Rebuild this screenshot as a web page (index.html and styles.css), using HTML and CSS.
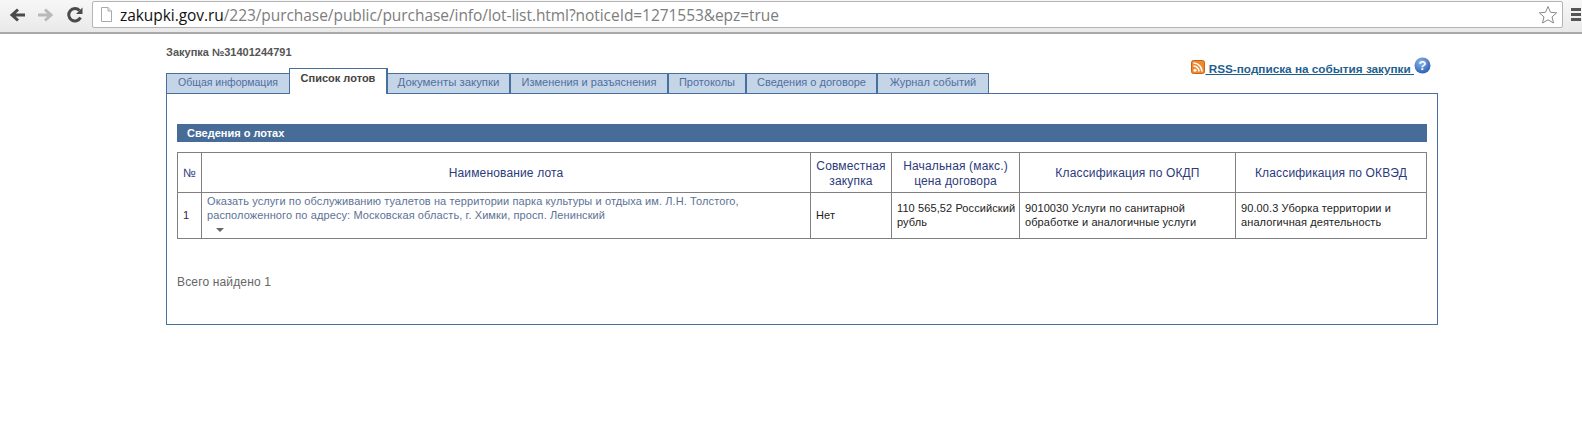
FILE: index.html
```html
<!DOCTYPE html>
<html lang="ru">
<head>
<meta charset="utf-8">
<title>Список лотов</title>
<link rel="stylesheet" href="styles.css">
</head>
<body>
<header class="toolbar">
  <svg class="nav-icon" width="20" height="20" viewBox="0 0 20 20"><path d="M18 10H6M11 4.5L5 10l6 5.5" fill="none" stroke="#4a4a4a" stroke-width="3"/></svg>
  <svg class="nav-icon" width="20" height="20" viewBox="0 0 20 20"><path d="M2 10h12M9 4.5l6 5.500-6 5.500" fill="none" stroke="#b9b9b9" stroke-width="3"/></svg>
  <svg class="nav-icon" width="20" height="20" viewBox="0 0 20 20"><path d="M15.500 12.500A6.200 6.200 0 1 1 14.500 5.500" fill="none" stroke="#4a4a4a" stroke-width="3"/><path d="M17.500 2.500v6.500h-6.500z" fill="#4a4a4a"/></svg>
  <div class="omnibox">
    <svg class="page-icon" width="13" height="15" viewBox="0 0 13 15"><path d="M1.500 .5h6.500l3.500 3.500v10.500h-10z" fill="#fff" stroke="#a9a9a9"/><path d="M8 .5v3.500h3.500" fill="#eee" stroke="#a9a9a9"/></svg>
    <span class="url"><span class="host">zakupki.gov.ru</span>/223/purchase/public/purchase/info/lot-list.html?noticeId=1271553&amp;epz=true</span>
    <svg class="star" width="20" height="20" viewBox="0 0 20 20"><path d="M10 1.500l2.500 5.800 6.200.5-4.700 4.100 1.500 6.100L10 14.800l-5.500 3.200L6 11.900 1.300 7.800l6.200-.5z" fill="#fff" stroke="#8a8a8a"/></svg>
  </div>
  <div class="menu-icon"><span></span><span></span><span></span></div>
</header>

<main class="page">
  <h1 class="purchase">Закупка №31401244791</h1>
  <div class="tabs-row">
    <nav class="tabs">
      <a class="tab tab-1">Общая информация</a>
      <a class="tab tab-2 active">Список лотов</a>
      <a class="tab tab-3">Документы закупки</a>
      <a class="tab tab-4">Изменения и разъяснения</a>
      <a class="tab tab-5">Протоколы</a>
      <a class="tab tab-6">Сведения о договоре</a>
      <a class="tab tab-7">Журнал событий</a>
    </nav>
    <div class="rss">
      <svg class="rss-icon" width="14" height="14" viewBox="0 0 14 14"><rect x=".5" y=".5" width="13" height="13" rx="2" fill="#ee8a2c" stroke="#c8641a"/><circle cx="4" cy="10.200" r="1.500" fill="#fff"/><path d="M2.500 6a5.500 5.500 0 0 1 5.500 5.500M2.500 3a8.500 8.500 0 0 1 8.500 8.500" fill="none" stroke="#fff" stroke-width="1.600"/></svg>
      <a class="rss-link"> RSS-подписка на события закупки </a>
      <svg class="help-icon" width="17" height="17" viewBox="0 0 17 17"><defs><radialGradient id="helpGradient" cx=".4" cy=".3" r=".8"><stop offset="0" stop-color="#8db4ea"/><stop offset="1" stop-color="#1f57ad"/></radialGradient></defs><circle cx="8.500" cy="8.500" r="8" fill="url(#helpGradient)"/><text x="8.500" y="13" class="help-mark">?</text></svg>
    </div>
  </div>
  <section class="panel">
    <h2 class="section-title">Сведения о лотах</h2>
    <table class="lots">
      <colgroup>
        <col class="c-num"><col class="c-name"><col class="c-joint"><col class="c-price"><col class="c-okdp"><col class="c-okved">
      </colgroup>
      <thead>
        <tr>
          <th class="num-head">№</th>
          <th>Наименование лота</th>
          <th>Совместная закупка</th>
          <th>Начальная (макс.) цена договора</th>
          <th>Классификация по ОКДП</th>
          <th>Классификация по ОКВЭД</th>
        </tr>
      </thead>
      <tbody>
        <tr>
          <td class="num">1</td>
          <td class="lot-name">
            <a>Оказать услуги по обслуживанию туалетов на территории парка культуры и отдыха им. Л.Н. Толстого, расположенного по адресу: Московская область, г. Химки, просп. Ленинский</a>
            <span class="caret"></span>
          </td>
          <td>Нет</td>
          <td>110 565,52 Российский рубль</td>
          <td>9010030 Услуги по санитарной обработке и аналогичные услуги</td>
          <td>90.00.3 Уборка территории и аналогичная деятельность</td>
        </tr>
      </tbody>
    </table>
    <p class="total">Всего найдено 1</p>
  </section>
</main>
</body>
</html>
```
FILE: styles.css
```css
* { box-sizing: border-box; }
html, body { margin: 0; padding: 0; background: #fff; overflow: hidden; }
body { font-family: "Liberation Sans", Arial, sans-serif; color: #333; }

.toolbar {
  display: flex;
  align-items: center;
  height: 34px;
  padding: 0 0 3px 7px;
  background: linear-gradient(#f7f7f7, #e9e9e9);
  border-bottom: 2px solid #a9a9a9;
  gap: 9px;
}
.nav-icon { flex: none; margin-top: 1px; }
.omnibox {
  display: flex;
  align-items: center;
  flex: none;
  width: 1471px;
  height: 27px;
  margin-left: -2px;
  padding: 0 4px 0 7px;
  background: #fff;
  border: 1px solid #b4b4b4;
  border-radius: 2px;
}
.page-icon { flex: none; margin-right: 7px; }
.url {
  flex: 1;
  font-family: "Open Sans", "Liberation Sans", sans-serif;
  font-size: 15.5px;
  color: #7d7d7d;
  white-space: nowrap;
  letter-spacing: -.06px;
}
.host { color: #111; }
.star { flex: none; }
.menu-icon { display: flex; flex-direction: column; gap: 2px; flex: none; margin-left: -1px; width: 10px; }
.menu-icon span { display: block; height: 3px; background: #555; }

.page { width: 1272px; margin-left: 166px; padding-top: 12px; }
.purchase { margin: 0; font-size: 11px; line-height: 12px; font-weight: bold; color: #555; }

.tabs-row {
  display: flex;
  justify-content: space-between;
  align-items: flex-end;
  height: 35px;
  margin-right: 7px;
  position: relative;
  z-index: 1;
}
.tabs { display: flex; align-items: flex-end; margin-bottom: -1px; }
.tab {
  display: block;
  height: 21px;
  padding-top: 2px;
  font-size: 11px;
  line-height: 13px;
  text-align: center;
  color: #4f6f9f;
  background: #c5d5e8;
  border: 1px solid #47709f;
  border-left-width: 0;
  border-right-width: 2px;
}
.tab-1 { width: 123px; font-size: 10.5px; border-left-width: 1px; border-right-width: 0; }
.tab-2 { width: 99px; }
.tab-3 { width: 123px; font-size: 11.4px; }
.tab-4 { width: 158px; }
.tab-5 { width: 78px; }
.tab-6 { width: 131px; }
.tab-7 { width: 111px; border-right-width: 1px; }
.tab.active {
  height: 26px;
  padding-top: 3px;
  font-weight: bold;
  color: #444;
  background: #fff;
  border-width: 1px 2px 0 1px;
}

.rss { display: flex; align-items: flex-end; margin-bottom: 18px; }
.rss-icon { flex: none; margin-bottom: 1px; }
.rss-link {
  font-size: 11.75px;
  line-height: 13px;
  font-weight: bold;
  color: #1f5f8f;
  text-decoration: underline;
  white-space: pre;
}
.help-icon { flex: none; margin-bottom: 1px; }
.help-mark { font: bold 13px "Liberation Sans", sans-serif; fill: #fff; text-anchor: middle; }

.panel {
  height: 232px;
  padding: 30px 10px 0;
  border: 1px solid #47709f;
}
.section-title {
  margin: 0;
  height: 18px;
  padding-left: 10px;
  font-size: 11px;
  line-height: 18px;
  font-weight: bold;
  color: #fff;
  background: #476c98;
}
.lots {
  width: 1249px;
  margin-top: 10px;
  table-layout: fixed;
  border-collapse: collapse;
  font-size: 11px;
  line-height: 14px;
}
.c-num { width: 24px; }
.c-name { width: 609px; }
.c-joint { width: 81px; }
.c-price { width: 128px; }
.c-okdp { width: 216px; }
.c-okved { width: 191px; }
.lots th, .lots td { border: 1px solid #808080; }
.lots th {
  height: 40px;
  padding: 2px 4px 0;
  font-size: 12px;
  line-height: 15px;
  font-weight: normal;
  letter-spacing: .15px;
  color: #2c3a7c;
}
.num-head { font-size: 11px; }
.lots td { height: 46px; padding: 0 2px 2px 5px; color: #222; letter-spacing: .1px; }
.lots td.num { color: #3a1a4a; }
.lots td.lot-name { padding: 1px 5px 0; vertical-align: top; color: #5c7296; }
.caret {
  display: block;
  width: 0;
  height: 0;
  margin: 6px 0 0 9px;
  border: 4px solid transparent;
  border-top: 4px solid #666;
  border-bottom-width: 0;
}
.total { margin: 36px 0 0; font-size: 12px; line-height: 14px; letter-spacing: .15px; color: #666; }
```
